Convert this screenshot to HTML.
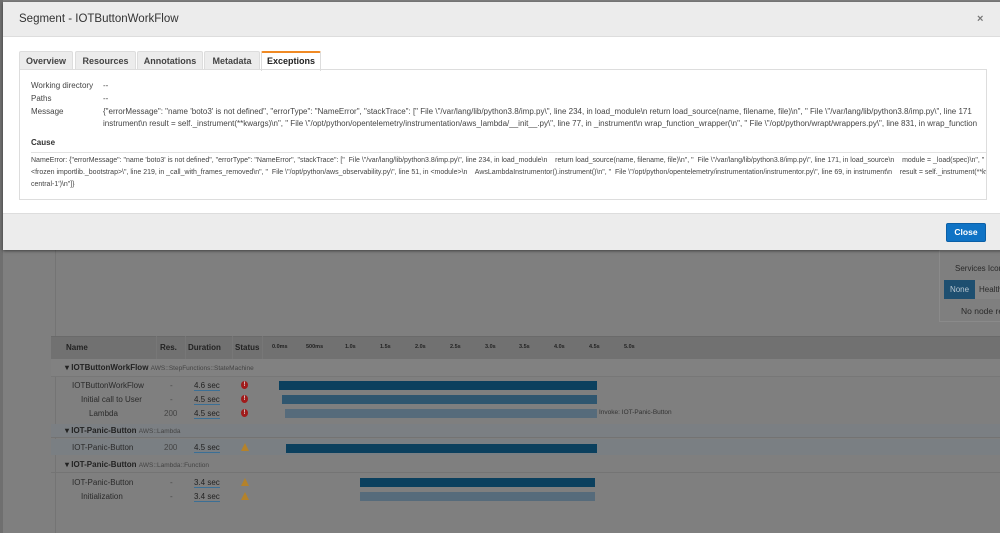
<!DOCTYPE html>
<html><head><meta charset="utf-8"><style>
*{margin:0;padding:0;box-sizing:border-box}
body{width:1000px;height:533px;overflow:hidden;background:#7f7f7f;font-family:"Liberation Sans",Arial,sans-serif;position:relative;color:#333}
.a{position:absolute;white-space:nowrap}
.modal{position:absolute;left:3px;top:2px;width:1000px;height:248px;background:#fff;box-shadow:0 1px 3px rgba(0,0,0,.5)}
.hd{position:absolute;left:0;top:0;width:100%;height:35px;background:#ececec;border-bottom:1px solid #ddd}
.ft{position:absolute;left:0;top:211px;width:100%;height:37px;background:#ececec;border-top:1px solid #ddd}
.tab{position:absolute;top:49px;height:19px;border:1px solid #ddd;border-bottom:none;background:#ececec;font-size:9px;font-weight:bold;color:#444;text-align:center;line-height:18px;border-radius:2px 2px 0 0}
.tab.on{background:#fff;border-top:2px solid #f08a24;height:20px;line-height:17px;color:#222}
.panel{position:absolute;left:16px;top:67px;width:968px;height:131px;border:1px solid #ddd;overflow:hidden}
.sm{font-size:8px;color:#444}
.xs{font-size:7px;color:#444;white-space:pre}
.bar{position:absolute;height:9px}
.d{background:#0b405e}.m{background:#2f566f}.l{background:#566b7b}
.dur{font-size:8px;color:#222;border-bottom:1px solid #3b6f95;line-height:9px}
.ic{position:absolute;width:7px;height:8px;border-radius:50%;background:#a01b1b;color:#ddd;font-size:6px;font-weight:bold;text-align:center;line-height:8px}
.tr{position:absolute;width:0;height:0;border-left:4px solid transparent;border-right:4px solid transparent;border-bottom:8px solid #b4822a}
</style></head><body>
<div class="a" style="left:0;top:0;width:3px;height:533px;background:#6f6f6f"></div>
<div class="a" style="left:55px;top:250px;width:1px;height:283px;background:#747474"></div>
<div class="a" style="left:939px;top:250px;width:70px;height:72px;border:1px solid #8a8a8a;background:#7f7f7f"></div>
<div class="a" style="left:955px;top:264px;font-size:8px;color:#2a2a2a">Services Icon</div>
<div class="a" style="left:944px;top:280px;width:31px;height:19px;background:#1e4f70;color:#b8c6d0;font-size:8px;line-height:19px;text-align:center">None</div>
<div class="a" style="left:975px;top:280px;width:30px;height:19px;background:#858585;color:#2a2a2a;font-size:8px;line-height:19px;padding-left:4px">Health</div>
<div class="a" style="left:961px;top:306px;font-size:8.5px;color:#2a2a2a">No node re</div>
<div class="a" style="left:51px;top:336px;width:949px;height:23px;background:#717171;border-top:1px solid #6a6a6a"></div>
<div class="a" style="left:66px;top:343px;font-size:8px;font-weight:bold;color:#222">Name</div>
<div class="a" style="left:160px;top:343px;font-size:8px;font-weight:bold;color:#222">Res.</div>
<div class="a" style="left:188px;top:343px;font-size:8px;font-weight:bold;color:#222">Duration</div>
<div class="a" style="left:235px;top:343px;font-size:8px;font-weight:bold;color:#222">Status</div>
<div class="a" style="left:156px;top:336px;width:1px;height:23px;background:#777"></div>
<div class="a" style="left:185px;top:336px;width:1px;height:23px;background:#777"></div>
<div class="a" style="left:232px;top:336px;width:1px;height:23px;background:#777"></div>
<div class="a" style="left:262px;top:336px;width:1px;height:23px;background:#777"></div>
<div style="font-size:5.5px;font-weight:bold;color:#222">
<div class="a" style="left:272px;top:344px">0.0ms</div><div class="a" style="left:306px;top:344px">500ms</div><div class="a" style="left:345px;top:344px">1.0s</div><div class="a" style="left:380px;top:344px">1.5s</div><div class="a" style="left:415px;top:344px">2.0s</div><div class="a" style="left:450px;top:344px">2.5s</div><div class="a" style="left:485px;top:344px">3.0s</div><div class="a" style="left:519px;top:344px">3.5s</div><div class="a" style="left:554px;top:344px">4.0s</div><div class="a" style="left:589px;top:344px">4.5s</div><div class="a" style="left:624px;top:344px">5.0s</div></div>
<div class="a" style="left:51px;top:359px;width:949px;height:18px;background:#818181;border-bottom:1px solid #777"></div>
<div class="a" style="left:65px;top:363px;font-size:8px;font-weight:bold;color:#222">▾ IOTButtonWorkFlow <span style="font-weight:normal;font-size:6.5px;color:#444">AWS::StepFunctions::StateMachine</span></div>
<div class="a sm" style="left:72px;top:381px;color:#2a2a2a">IOTButtonWorkFlow</div><div class="a sm" style="left:170px;top:381px">-</div><div class="a dur" style="left:194px;top:381px">4.6 sec</div><div class="ic" style="left:241px;top:381px">!</div>
<div class="a sm" style="left:81px;top:395px;color:#2a2a2a">Initial call to User</div><div class="a sm" style="left:170px;top:395px">-</div><div class="a dur" style="left:194px;top:395px">4.5 sec</div><div class="ic" style="left:241px;top:395px">!</div>
<div class="a sm" style="left:89px;top:409px;color:#2a2a2a">Lambda</div><div class="a sm" style="left:164px;top:409px">200</div><div class="a dur" style="left:194px;top:409px">4.5 sec</div><div class="ic" style="left:241px;top:409px">!</div>
<div class="bar d" style="left:279px;top:381px;width:318px"></div>
<div class="bar m" style="left:282px;top:395px;width:315px"></div>
<div class="bar l" style="left:285px;top:409px;width:312px"></div>
<div class="a" style="left:599px;top:409px;font-size:6.5px;color:#333">Invoke: IOT-Panic-Button</div>
<div class="a" style="left:51px;top:424px;width:949px;height:14px;background:#7b7f83;border-bottom:1px solid #737373"></div>
<div class="a" style="left:65px;top:426px;font-size:8px;font-weight:bold;color:#222">▾ IOT-Panic-Button <span style="font-weight:normal;font-size:6.5px;color:#444">AWS::Lambda</span></div>
<div class="a" style="left:51px;top:439px;width:949px;height:16px;background:#7a7f83"></div>
<div class="a sm" style="left:72px;top:443px;color:#2a2a2a">IOT-Panic-Button</div><div class="a sm" style="left:164px;top:443px">200</div><div class="a dur" style="left:194px;top:443px">4.5 sec</div><div class="tr" style="left:241px;top:443px"></div>
<div class="bar d" style="left:286px;top:444px;width:311px"></div>
<div class="a" style="left:51px;top:472px;width:949px;height:1px;background:#747474"></div>
<div class="a" style="left:65px;top:460px;font-size:8px;font-weight:bold;color:#222">▾ IOT-Panic-Button <span style="font-weight:normal;font-size:6.5px;color:#444">AWS::Lambda::Function</span></div>
<div class="a sm" style="left:72px;top:478px;color:#2a2a2a">IOT-Panic-Button</div><div class="a sm" style="left:170px;top:478px">-</div><div class="a dur" style="left:194px;top:478px">3.4 sec</div><div class="tr" style="left:241px;top:478px"></div>
<div class="a sm" style="left:81px;top:492px;color:#2a2a2a">Initialization</div><div class="a sm" style="left:170px;top:492px">-</div><div class="a dur" style="left:194px;top:492px">3.4 sec</div><div class="tr" style="left:241px;top:492px"></div>
<div class="bar d" style="left:360px;top:478px;width:235px"></div>
<div class="bar l" style="left:360px;top:492px;width:235px"></div>
<div class="modal">
<div class="hd"><div class="a" style="left:16px;top:11px;font-size:11.5px;color:#333">Segment - IOTButtonWorkFlow</div><div class="a" style="left:974px;top:11px;font-size:11px;font-weight:bold;color:#777">×</div></div>
<div class="tab" style="left:16px;width:54px">Overview</div>
<div class="tab" style="left:72px;width:61px">Resources</div>
<div class="tab" style="left:134px;width:66px">Annotations</div>
<div class="tab" style="left:201px;width:56px">Metadata</div>
<div class="tab on" style="left:258px;width:60px">Exceptions</div>
<div class="panel">
<div class="a sm" style="left:11px;top:11px">Working directory</div><div class="a sm" style="left:83px;top:11px">--</div>
<div class="a sm" style="left:11px;top:24px">Paths</div><div class="a sm" style="left:83px;top:24px">--</div>
<div class="a sm" style="left:11px;top:37px">Message</div>
<div class="a sm" style="left:83px;top:37px">{"errorMessage": "name 'boto3' is not defined", "errorType": "NameError", "stackTrace": [" File \"/var/lang/lib/python3.8/imp.py\", line 234, in load_module\n return load_source(name, filename, file)\n", " File \"/var/lang/lib/python3.8/imp.py\", line 171</div>
<div class="a sm" style="left:83px;top:49px">instrument\n result = self._instrument(**kwargs)\n", " File \"/opt/python/opentelemetry/instrumentation/aws_lambda/__init__.py\", line 77, in _instrument\n wrap_function_wrapper(\n", " File \"/opt/python/wrapt/wrappers.py\", line 831, in wrap_function</div>
<div class="a" style="left:11px;top:68px;font-size:8px;font-weight:bold;color:#333">Cause</div>
<div class="a" style="left:11px;top:82px;width:960px;height:1px;background:#e2e2e2"></div>
<div class="a xs" style="left:11px;top:87px">NameError: {"errorMessage": "name 'boto3' is not defined", "errorType": "NameError", "stackTrace": ["  File \"/var/lang/lib/python3.8/imp.py\", line 234, in load_module\n    return load_source(name, filename, file)\n", "  File \"/var/lang/lib/python3.8/imp.py\", line 171, in load_source\n    module = _load(spec)\n", "  File</div>
<div class="a xs" style="left:11px;top:99px">&lt;frozen importlib._bootstrap&gt;\", line 219, in _call_with_frames_removed\n", "  File \"/opt/python/aws_observability.py\", line 51, in &lt;module&gt;\n    AwsLambdaInstrumentor().instrument()\n", "  File \"/opt/python/opentelemetry/instrumentation/instrumentor.py\", line 69, in instrument\n    result = self._instrument(**kwargs)</div>
<div class="a xs" style="left:11px;top:111px">central-1')\n"]}</div>
</div>
<div class="ft"><div class="a" style="left:943px;top:9px;width:40px;height:19px;background:#0f73c5;border:1px solid #0b5fa6;border-radius:2px;color:#fff;font-size:8.5px;font-weight:bold;text-align:center;line-height:17px">Close</div></div>
</div>
</body></html>
